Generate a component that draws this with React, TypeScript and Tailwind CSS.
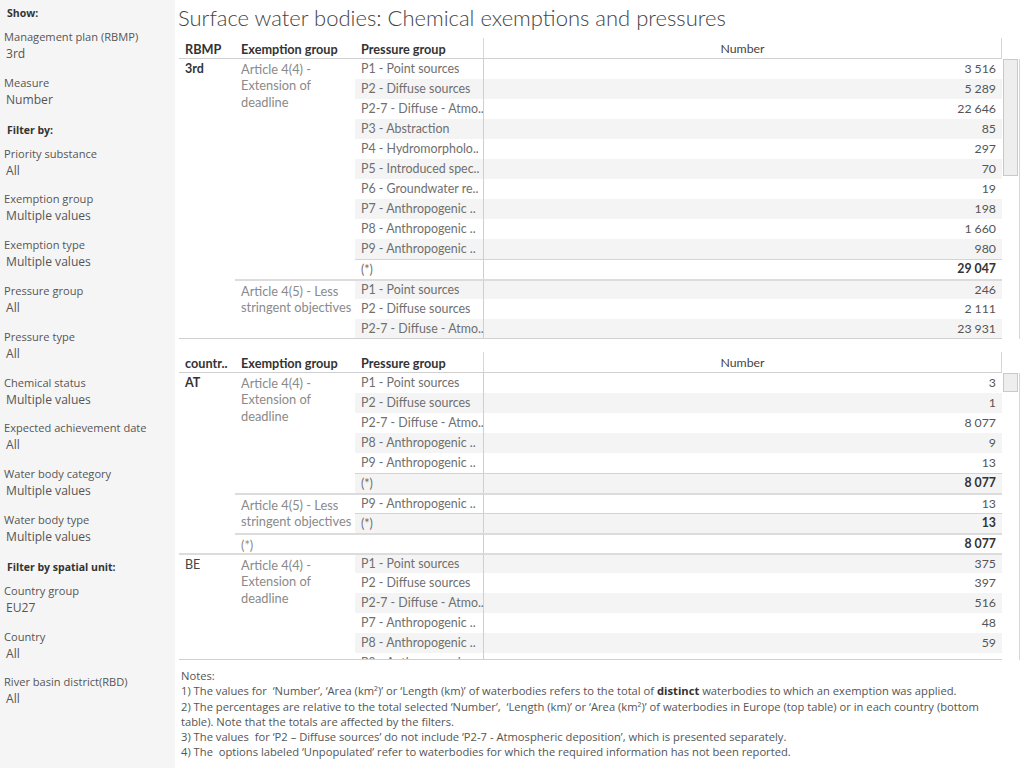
import React from "react";

type PressureRow = { p: string; v: string; total?: boolean };
type Block = { name: string[]; rows: PressureRow[] };
type Group = { name: string; strong?: boolean; blocks: Block[] };

const LATO = { fontFamily: "Lato, 'Open Sans', 'Noto Sans', sans-serif" };
const OPEN = { fontFamily: "'Open Sans', 'Noto Sans', Lato, sans-serif" };

// numbers use a narrow no-break space as thousands separator
const ns = (s: string) => s.replace(/ /g, "\u202F");

const ART44 = ["Article 4(4) -", "Extension of", "deadline"];
const ART45 = ["Article 4(5) - Less", "stringent objectives"];

const euGroups: Group[] = [
  {
    name: "3rd",
    strong: true,
    blocks: [
      {
        name: ART44,
        rows: [
          { p: "P1 - Point sources", v: "3 516" },
          { p: "P2 - Diffuse sources", v: "5 289" },
          { p: "P2-7 - Diffuse - Atmo..", v: "22 646" },
          { p: "P3 - Abstraction", v: "85" },
          { p: "P4 - Hydromorpholo..", v: "297" },
          { p: "P5 - Introduced spec..", v: "70" },
          { p: "P6 - Groundwater re..", v: "19" },
          { p: "P7 - Anthropogenic ..", v: "198" },
          { p: "P8 - Anthropogenic ..", v: "1 660" },
          { p: "P9 - Anthropogenic ..", v: "980" },
          { p: "(*)", v: "29 047", total: true },
        ],
      },
      {
        name: ART45,
        rows: [
          { p: "P1 - Point sources", v: "246" },
          { p: "P2 - Diffuse sources", v: "2 111" },
          { p: "P2-7 - Diffuse - Atmo..", v: "23 931" },
          { p: "P3 - Abstraction", v: "12" },
          { p: "P4 - Hydromorpholo..", v: "41" },
        ],
      },
    ],
  },
];

const countryGroups: Group[] = [
  {
    name: "AT",
    strong: true,
    blocks: [
      {
        name: ART44,
        rows: [
          { p: "P1 - Point sources", v: "3" },
          { p: "P2 - Diffuse sources", v: "1" },
          { p: "P2-7 - Diffuse - Atmo..", v: "8 077" },
          { p: "P8 - Anthropogenic ..", v: "9" },
          { p: "P9 - Anthropogenic ..", v: "13" },
          { p: "(*)", v: "8 077", total: true },
        ],
      },
      {
        name: ART45,
        rows: [
          { p: "P9 - Anthropogenic ..", v: "13" },
          { p: "(*)", v: "13", total: true },
        ],
      },
      { name: ["(*)"], rows: [{ p: "", v: "8 077", total: true }] },
    ],
  },
  {
    name: "BE",
    blocks: [
      {
        name: ART44,
        rows: [
          { p: "P1 - Point sources", v: "375" },
          { p: "P2 - Diffuse sources", v: "397" },
          { p: "P2-7 - Diffuse - Atmo..", v: "516" },
          { p: "P7 - Anthropogenic ..", v: "48" },
          { p: "P8 - Anthropogenic ..", v: "59" },
          { p: "P9 - Anthropogenic ..", v: "303" },
          { p: "(*)", v: "1 068", total: true },
        ],
      },
    ],
  },
];

function PivotBody({ groups }: { groups: Group[] }) {
  const cells: React.ReactNode[] = [];
  let row = 1;
  let stripe = 0;
  groups.forEach((g, gi) => {
    const gRows = g.blocks.reduce((n, b) => n + b.rows.length, 0);
    cells.push(
      <div
        key={`g${gi}`}
        style={{ gridColumn: "1", gridRow: `${row} / span ${gRows}` }}
        className={`pl-[6px] pt-[1px] leading-[18px] text-[12.5px] ${
          g.strong ? "font-bold text-[#333]" : "text-[#444]"
        } ${gi > 0 ? "border-t-2 border-[#dcdcdc]" : ""}`}
      >
        {g.name}
      </div>
    );
    g.blocks.forEach((b, bi) => {
      const firstLine = gi > 0 || bi > 0;
      cells.push(
        <div
          key={`b${gi}-${bi}`}
          style={{ gridColumn: "2", gridRow: `${row} / span ${b.rows.length}` }}
          className={`pl-[6px] pt-[1.5px] leading-[16.5px] text-[12.8px] text-[#8a8a8a] ${
            firstLine ? "border-t-2 border-[#dcdcdc]" : ""
          }`}
        >
          {b.name.map((t, i) => (
            <div key={i} className="whitespace-nowrap">
              {t}
            </div>
          ))}
        </div>
      );
      b.rows.forEach((r, ri) => {
        const shaded = stripe % 2 === 1 ? "bg-[#f4f4f4]" : "bg-white";
        let line = "";
        if (ri === 0 && firstLine) line = "border-t-2 border-[#dcdcdc]";
        else if (r.total) line = "border-t border-[#d4d4d4]";
        cells.push(
          <div
            key={`p${row}`}
            style={{ gridColumn: "3", gridRow: `${row}` }}
            className={`${shaded} ${line} flex items-center pl-[6px] pt-[1px] text-[12.4px] text-[#6f6f6f] whitespace-nowrap overflow-hidden`}
          >
            {r.p}
          </div>
        );
        cells.push(
          <div
            key={`v${row}`}
            style={{ gridColumn: "4", gridRow: `${row}` }}
            className={`${shaded} ${line} border-l border-l-[#cfcfcf] flex items-center justify-end pr-[6px] text-[12.3px] ${
              r.total ? "font-bold text-[#333]" : "text-[#555]"
            }`}
          >
            {ns(r.v)}
          </div>
        );
        row += 1;
        stripe += 1;
      });
    });
  });
  return <div className="grid grid-cols-[56px_120px_128px_519px] auto-rows-[20px]">{cells}</div>;
}

function HeaderRow({ first }: { first: string }) {
  return (
    <div className="flex">
      <div className="grid grid-cols-[56px_120px_128px_519px] h-[21px] border-b border-[#d0d0d0] text-[12.7px] font-bold text-[#333]">
        <div className="pl-[6px] pt-[2px] leading-[18px] whitespace-nowrap">{first}</div>
        <div className="pl-[6px] pt-[2px] leading-[18px] whitespace-nowrap">Exemption group</div>
        <div className="pl-[6px] pt-[2px] leading-[18px] whitespace-nowrap">Pressure group</div>
        <div className="border-l border-r border-[#d6d6d6] pt-[2px] leading-[18px] text-center text-[12.3px] font-normal text-[#444]">
          Number
        </div>
      </div>
      <div className="w-[18px]" />
    </div>
  );
}

function ScrollTrack({ thumb }: { thumb: string }) {
  return (
    <div className="w-[18px] flex flex-col border-r border-[#d6d6d6] bg-white">
      <div className={`${thumb} mx-[1px] bg-[#eeeeee] border border-[#c9c9c9]`} />
    </div>
  );
}

function PivotTable({
  first,
  groups,
  bodyHeight,
  thumb,
}: {
  first: string;
  groups: Group[];
  bodyHeight: string;
  thumb: string;
}) {
  return (
    <div className="pl-[4px]" style={LATO}>
      <HeaderRow first={first} />
      <div className={`flex ${bodyHeight}`}>
        <div className="w-[823px] overflow-hidden border-b border-[#d0d0d0]">
          <PivotBody groups={groups} />
        </div>
        <ScrollTrack thumb={thumb} />
      </div>
    </div>
  );
}

function FilterItem({ label, value }: { label: string; value: string }) {
  return (
    <div className="h-[45.8px]">
      <div className="pl-[4px] leading-[17px] text-[11.1px] text-[#555] whitespace-nowrap">{label}</div>
      <div className="pl-[6px] leading-[17px] text-[12.1px] text-[#555] whitespace-nowrap">{value}</div>
    </div>
  );
}

function SectionTitle({ children, className = "" }: { children: React.ReactNode; className?: string }) {
  return (
    <div className={`pl-[7px] h-[18px] leading-[18px] text-[10.5px] font-bold text-[#333] ${className}`}>
      {children}
    </div>
  );
}

function Sidebar() {
  return (
    <aside className="w-[175px] shrink-0 bg-[#f5f5f5] min-h-[768px]" style={OPEN}>
      <SectionTitle className="mt-[4px]">Show:</SectionTitle>
      <div className="mt-[6px]">
        <FilterItem label="Management plan (RBMP)" value="3rd" />
        <FilterItem label="Measure" value="Number" />
      </div>
      <SectionTitle className="mt-[1px]">Filter by:</SectionTitle>
      <div className="mt-[6px]">
        <FilterItem label="Priority substance" value="All" />
        <FilterItem label="Exemption group" value="Multiple values" />
        <FilterItem label="Exemption type" value="Multiple values" />
        <FilterItem label="Pressure group" value="All" />
        <FilterItem label="Pressure type" value="All" />
        <FilterItem label="Chemical status" value="Multiple values" />
        <FilterItem label="Expected achievement date" value="All" />
        <FilterItem label="Water body category" value="Multiple values" />
        <FilterItem label="Water body type" value="Multiple values" />
      </div>
      <SectionTitle className="mt-[1px]">Filter by spatial unit:</SectionTitle>
      <div className="mt-[6px]">
        <FilterItem label="Country group" value="EU27" />
        <FilterItem label="Country" value="All" />
        <FilterItem label="River basin district(RBD)" value="All" />
      </div>
    </aside>
  );
}

function Notes() {
  const lines: React.ReactNode[] = [
    "Notes:",
    <>
      1) The values for  ‘Number’, ‘Area (km²)’ or ‘Length (km)’ of waterbodies refers to the total of{" "}
      <span className="font-bold text-[#333]">distinct</span> waterbodies to which an exemption was applied.
    </>,
    "2) The percentages are relative to the total selected ‘Number’,  ‘Length (km)’ or ‘Area (km²)’ of waterbodies in Europe (top table) or in each country (bottom",
    "table). Note that the totals are affected by the filters.",
    "3) The values  for ‘P2 – Diffuse sources’ do not include ‘P2-7 - Atmospheric deposition’, which is presented separately.",
    "4) The  options labeled ‘Unpopulated’ refer to waterbodies for which the required information has not been reported.",
  ];
  return (
    <div className="mt-[8px] pl-[6px] text-[11.2px] leading-[15.3px] text-[#555]" style={OPEN}>
      {lines.map((l, i) => (
        <div key={i} className="whitespace-pre">
          {l}
        </div>
      ))}
    </div>
  );
}

export default function App() {
  return (
    <div className="flex w-[1024px] h-[768px] overflow-hidden bg-white" style={LATO}>
      <Sidebar />
      <main className="flex-1 min-w-0">
        <h1 className="pl-[3px] pt-[6px] leading-[24px] text-[22px] font-light text-[#444] whitespace-nowrap">
          Surface water bodies: Chemical exemptions and pressures
        </h1>
        <div className="mt-[8px]">
          <PivotTable first="RBMP" groups={euGroups} bodyHeight="h-[280px]" thumb="h-[117px]" />
        </div>
        <div className="mt-[13px]">
          <PivotTable first="countr.." groups={countryGroups} bodyHeight="h-[287px]" thumb="h-[19px]" />
        </div>
        <Notes />
      </main>
    </div>
  );
}
